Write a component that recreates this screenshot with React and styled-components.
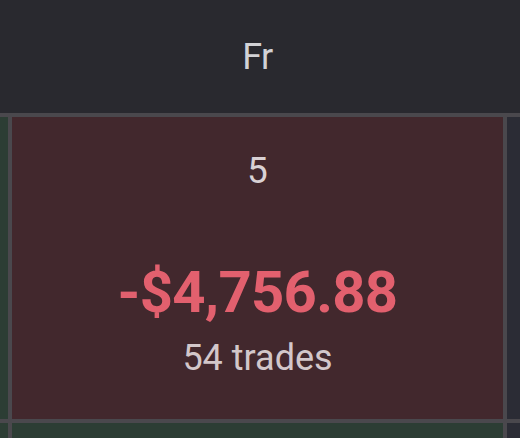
import React from "react";
import styled, { createGlobalStyle } from "styled-components";

const Global = createGlobalStyle`
  html, body { margin: 0; padding: 0; background: #29292f; }
  body { font-family: Roboto, "Noto Sans", sans-serif; overflow: hidden; }
`;

const Calendar = styled.div`
  width: 520px;
  height: 438px;
  overflow: hidden;
  display: flex;
  flex-direction: column;
  background: #4a484d;
  row-gap: 4px;
`;

const HeaderRow = styled.div`
  display: grid;
  grid-template-columns: 8px 491px 13px;
  column-gap: 4px;
  height: 113px;
  flex: none;
  background: #29292f;
`;

const DayName = styled.div`
  display: flex;
  align-items: center;
  justify-content: center;
  font-size: 36px;
  line-height: 1;
  color: #d2d2d6;
  letter-spacing: -0.5px;
  overflow: hidden;
  white-space: nowrap;
`;

const WeekRow = styled.div`
  display: grid;
  grid-template-columns: 8px 491px 13px;
  column-gap: 4px;
  height: ${(p) => p.$h}px;
  flex: none;
`;

const tones = {
  loss: "#42282d",
  win: "#2c3d34",
  empty: "#2b2c35",
};

const Cell = styled.div`
  background: ${(p) => tones[p.$tone]};
  display: flex;
  flex-direction: column;
  align-items: center;
  overflow: hidden;
  padding-top: 35px;
  box-sizing: border-box;
`;

const DayNumber = styled.div`
  font-size: 37px;
  line-height: 37px;
  color: #d9d1d4;
`;

const Amount = styled.div`
  margin-top: 74px;
  font-size: 58px;
  line-height: 58px;
  font-weight: 700;
  letter-spacing: -0.7px;
  color: #e2606e;
  white-space: nowrap;
`;

const Trades = styled.div`
  margin-top: 19px;
  font-size: 36px;
  line-height: 36px;
  color: #d3c7ca;
  white-space: nowrap;
`;

export default function App() {
  return (
    <>
      <Global />
      <Calendar>
        <HeaderRow>
          <DayName />
          <DayName>Fr</DayName>
          <DayName />
        </HeaderRow>
        <WeekRow $h={302}>
          <Cell $tone="win" />
          <Cell $tone="loss">
            <DayNumber>5</DayNumber>
            <Amount>-$4,756.88</Amount>
            <Trades>54 trades</Trades>
          </Cell>
          <Cell $tone="empty" />
        </WeekRow>
        <WeekRow $h={60}>
          <Cell $tone="win" />
          <Cell $tone="win" />
          <Cell $tone="empty" />
        </WeekRow>
      </Calendar>
    </>
  );
}
